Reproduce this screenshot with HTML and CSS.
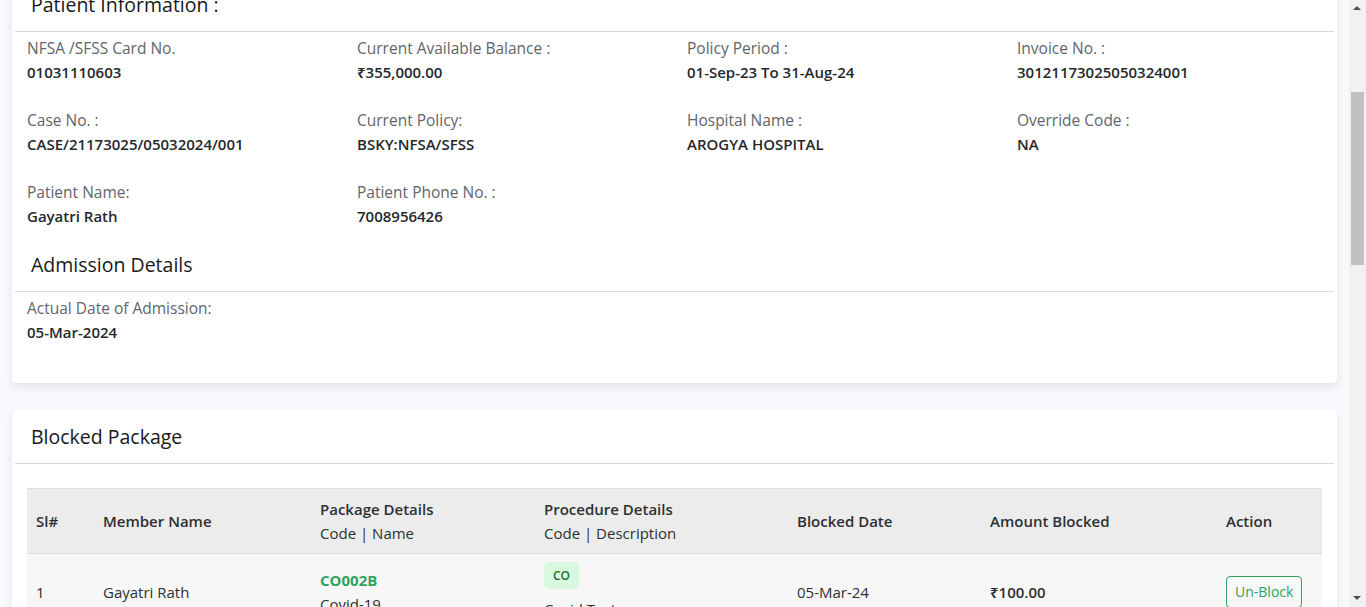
FILE: index.html
```html
<!DOCTYPE html>
<html>
<head>
<meta charset="utf-8">
<link rel="stylesheet" href="styles.css">
</head>
<body>
<div class="viewport">
  <main class="page">
    <section class="card card-first">
      <div class="card-header"><h2>Patient Information :</h2></div>
      <div class="info-grid">
        <div class="item"><div class="label">NFSA /SFSS Card No.</div><div class="value">01031110603</div></div>
        <div class="item"><div class="label">Current Available Balance :</div><div class="value">₹355,000.00</div></div>
        <div class="item"><div class="label">Policy Period :</div><div class="value">01-Sep-23 To 31-Aug-24</div></div>
        <div class="item"><div class="label">Invoice No. :</div><div class="value">30121173025050324001</div></div>
        <div class="item"><div class="label">Case No. :</div><div class="value">CASE/21173025/05032024/001</div></div>
        <div class="item"><div class="label">Current Policy:</div><div class="value">BSKY:NFSA/SFSS</div></div>
        <div class="item"><div class="label">Hospital Name :</div><div class="value">AROGYA HOSPITAL</div></div>
        <div class="item"><div class="label">Override Code :</div><div class="value">NA</div></div>
        <div class="item"><div class="label">Patient Name:</div><div class="value">Gayatri Rath</div></div>
        <div class="item"><div class="label">Patient Phone No. :</div><div class="value">7008956426</div></div>
      </div>
      <div class="sub-header"><h2>Admission Details</h2></div>
      <div class="info-grid last">
        <div class="item"><div class="label">Actual Date of Admission:</div><div class="value">05-Mar-2024</div></div>
      </div>
    </section>

    <section class="card">
      <div class="card-header"><h2>Blocked Package</h2></div>
      <div class="card-body">
        <table class="pkg-table">
          <colgroup>
            <col style="width:67px"><col style="width:217px"><col style="width:224px"><col style="width:253px"><col style="width:193px"><col style="width:236px"><col>
          </colgroup>
          <thead>
            <tr>
              <th>Sl#</th>
              <th>Member Name</th>
              <th>Package Details<br><span class="thin">Code | Name</span></th>
              <th>Procedure Details<br><span class="thin">Code | Description</span></th>
              <th>Blocked Date</th>
              <th>Amount Blocked</th>
              <th>Action</th>
            </tr>
          </thead>
          <tbody>
            <tr>
              <td>1</td>
              <td>Gayatri Rath</td>
              <td><div class="pkg-code">CO002B</div><div>Covid-19</div></td>
              <td><span class="badge">CO</span><div class="proc-desc">Covid Test</div></td>
              <td>05-Mar-24</td>
              <td class="amount">₹100.00</td>
              <td><button class="btn-unblock">Un-Block</button></td>
            </tr>
          </tbody>
        </table>
      </div>
    </section>
  </main>
  <div class="scrollbar">
    <div class="arrow up"></div>
    <div class="track"><div class="thumb"></div></div>
    <div class="arrow down"></div>
  </div>
</div>
</body>
</html>
```
FILE: styles.css
```css
* { box-sizing: border-box; }
html, body { margin: 0; padding: 0; height: 100%; overflow: hidden; }
body {
  font-family: "Open Sans", "Noto Sans", sans-serif;
  color: #212529;
  background: #f8f9fc;
}
.viewport { display: flex; height: 607px; overflow: hidden; }
.page { flex: 1; padding: 0 12px; min-width: 0; }
.card {
  background: #fff;
  border-radius: 5px;
  box-shadow: 0 4px 10px rgba(0,0,0,0.09);
  padding: 0 3px;
  margin-bottom: 27px;
}
.card-first { margin-top: -22px; }
.card-header {
  height: 54px;
  display: flex;
  align-items: center;
  padding: 0 16px;
  border-bottom: 1px solid #dcdcdc;
}
h2 { margin: 0; font-size: 19.5px; font-weight: 500; line-height: 24px; color: #16191c; }
.info-grid {
  display: grid;
  grid-template-columns: repeat(4, 330px);
  padding-top: 5px;
}
.item { padding: 0 12px; height: 72px; }
.label { font-size: 15.5px; line-height: 22px; color: #5f656b; }
.value { font-size: 15px; line-height: 26px; font-weight: 600; color: #25282b; }
.sub-header {
  padding: 0 16px 14px;
  border-bottom: 1px solid #dcdcdc;
}
.info-grid.last { padding-bottom: 14px; }
.card-body { padding: 24px 12px 40px 12px; }
.pkg-table { width: 100%; border-collapse: collapse; table-layout: fixed; font-size: 15px; }
.pkg-table th {
  background: #ececec;
  text-align: left;
  font-weight: 600;
  color: #2d3033;
  padding: 8px 9px;
  line-height: 24px;
  border-top: 1px solid #dcdcdc;
  border-bottom: 1px solid #dcdcdc;
  vertical-align: middle;
}
.pkg-table th .thin { font-weight: 400; }
.pkg-table td {
  background: #f7f7f7;
  padding: 8px 9px;
  line-height: 24px;
  vertical-align: middle;
  color: #2d3033;
}
.pkg-code { color: #2ea35f; font-weight: 700; }
.badge {
  display: inline-block;
  background: #d8f9df;
  color: #1e6f2a;
  font-size: 12px;
  font-weight: 600;
  padding: 2px 9px;
  border-radius: 5px;
  line-height: 23px;
}
.proc-desc { margin-top: 8px; }
.amount { font-weight: 600; }
.btn-unblock {
  font-family: inherit;
  font-size: 14px;
  color: #2ea35f;
  background: transparent;
  border: 1px solid #2ea35f;
  border-radius: 4px;
  padding: 4px 8px;
  line-height: 22px;
}
.scrollbar { width: 17px; background: #f1f1f1; display: flex; flex-direction: column; }
.arrow { height: 17px; position: relative; }
.arrow.up::after, .arrow.down::after {
  content: ""; position: absolute; left: 4px; width: 0; height: 0;
  border-left: 4px solid transparent; border-right: 4px solid transparent;
}
.arrow.up::after { top: 6px; border-bottom: 4px solid #505050; }
.arrow.down::after { top: 6px; border-top: 4px solid #505050; }
.track { flex: 1; padding: 75px 2px 0; }
.thumb { height: 173px; background: #c1c1c1; }
```
